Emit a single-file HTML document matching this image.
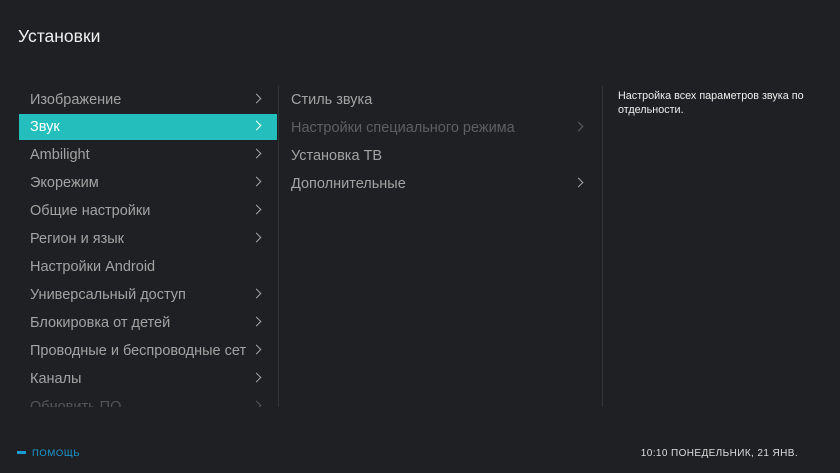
<!DOCTYPE html>
<html><head><meta charset="utf-8"><style>
body{margin:0;width:840px;height:473px;background:#1f2023;font-family:"Liberation Sans",sans-serif;overflow:hidden;position:relative}
.t{position:absolute;left:18px;top:26px;font-size:17.5px;color:#f0f0f0}
.row{position:absolute;height:26px;line-height:26px;font-size:14.5px;color:#a3a3a3;white-space:nowrap}
.l{left:19px;width:258px;padding-left:11px;box-sizing:border-box}
.r{left:291px;width:300px}
.sel{background:#24bfbd;color:#fff}
.ch{position:absolute;top:8px;width:6px;height:6px;border-top:1.5px solid currentColor;border-right:1.5px solid currentColor;transform:rotate(45deg)}
.l .ch{left:234px}.r .ch{left:284px}
.dv{position:absolute;width:1px;background:#333539;top:86px;height:321px}
.clip{position:absolute;left:0;top:87px;width:278px;height:320px;overflow:hidden}
.desc{position:absolute;left:618px;top:89px;width:200px;font-size:10.8px;line-height:14px;color:#eee}
.help{position:absolute;left:17px;top:448px;font-size:9.5px;letter-spacing:.6px;color:#1b9ad6}
.help:before{content:"";display:inline-block;width:9px;height:3px;background:#1b9ad6;vertical-align:middle;margin-right:6px;margin-top:-2px}
.time{position:absolute;right:42px;top:448px;font-size:10px;letter-spacing:.4px;color:#ddd}
</style></head><body>
<div class="t">Установки</div>
<div class="clip">
<div class="row l" style="top:0px">Изображение<span class="ch"></span></div>
<div class="row l sel" style="top:27px">Звук<span class="ch"></span></div>
<div class="row l" style="top:55px">Ambilight<span class="ch"></span></div>
<div class="row l" style="top:83px">Экорежим<span class="ch"></span></div>
<div class="row l" style="top:111px">Общие настройки<span class="ch"></span></div>
<div class="row l" style="top:139px">Регион и язык<span class="ch"></span></div>
<div class="row l" style="top:167px">Настройки Android</div>
<div class="row l" style="top:195px">Универсальный доступ<span class="ch"></span></div>
<div class="row l" style="top:223px">Блокировка от детей<span class="ch"></span></div>
<div class="row l" style="top:251px;overflow:hidden"><span style="display:inline-block;width:216px;overflow:hidden;vertical-align:top">Проводные и беспроводные сети</span><span class="ch"></span></div>
<div class="row l" style="top:279px">Каналы<span class="ch"></span></div>
<div class="row l" style="top:307px;color:#555">Обновить ПО<span class="ch"></span></div>
</div>
<div class="dv" style="left:278px"></div>
<div class="dv" style="left:602px"></div>
<div class="row r" style="top:87px">Стиль звука</div>
<div class="row r" style="top:115px;color:#5e5f62">Настройки специального режима<span class="ch"></span></div>
<div class="row r" style="top:143px">Установка ТВ</div>
<div class="row r" style="top:171px">Дополнительные<span class="ch"></span></div>
<div class="desc">Настройка всех параметров звука по отдельности.</div>
<div class="help">ПОМОЩЬ</div>
<div class="time">10:10 ПОНЕДЕЛЬНИК, 21 ЯНВ.</div>
</body></html>
